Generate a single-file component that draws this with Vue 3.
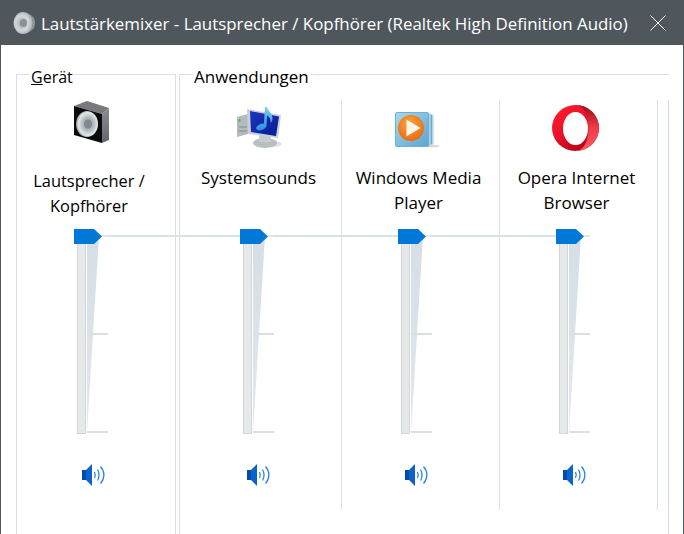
<script setup>
const apps = [
  { name: 'Systemsounds', icon: 'sys', cls: 'c-sys' },
  { name: 'Windows Media\nPlayer', icon: 'wmp', cls: 'c-wmp' },
  { name: 'Opera Internet\nBrowser', icon: 'opera', cls: 'c-opera' },
]
</script>

<template>
  <div class="win">
    <header class="title">
      <svg class="tico" width="22" height="24" viewBox="0 0 22 24">
        <defs>
          <radialGradient id="tg" cx="45%" cy="50%" r="55%"><stop offset="0" stop-color="#9aa0a4"/><stop offset=".6" stop-color="#d4d8da"/><stop offset="1" stop-color="#aab0b3"/></radialGradient>
        </defs>
        <path d="M10 2c5 .5 8 1.500 10.500 4.500 2 3 2 8 0 11-2.500 3-5.500 4.500-10.500 4.500z" fill="#8d9397"/>
        <ellipse cx="10" cy="12" rx="9.500" ry="11" fill="url(#tg)"/>
        <ellipse cx="10.500" cy="12" rx="3.500" ry="4" fill="#8a9094"/>
      </svg>
      <span class="ttext">Lautstärkemixer - Lautsprecher / Kopfhörer (Realtek High Definition Audio)</span>
      <svg class="close" width="16" height="16" viewBox="0 0 16 16"><path d="M.5.500l15 15M15.500.500l-15 15" stroke="#fff" fill="none"/></svg>
    </header>
    <main class="body">
      <div class="link"></div>
      <section class="group dev">
        <span class="legend"><u>G</u>erät</span>
        <div class="chan c-dev">
          <div class="icon">
            <svg width="36" height="44" viewBox="0 0 36 44">
              <defs>
                <radialGradient id="cone" cx="55%" cy="50%" r="55%"><stop offset="0" stop-color="#7f898e"/><stop offset=".5" stop-color="#b4c0c4"/><stop offset=".8" stop-color="#e2e8e9"/><stop offset="1" stop-color="#8b9092"/></radialGradient>
                <linearGradient id="side" x1="0" y1="0" x2="0" y2="1"><stop offset="0" stop-color="#8a8e92"/><stop offset="1" stop-color="#63676b"/></linearGradient>
              </defs>
              <path d="M1 6 L14 1 L36 8 L29 14z" fill="#77797c"/>
              <path d="M1 6 L29 14 V43 L1 35z" fill="#0b0b0b"/>
              <path d="M29 14 L36 8 V40 L29 43z" fill="url(#side)"/>
              <ellipse cx="14" cy="24" rx="11" ry="13" fill="url(#cone)"/>
              <ellipse cx="15" cy="24" rx="4" ry="4.500" fill="#7f898e"/>
            </svg>
          </div>
          <div class="name">{{ 'Lautsprecher /\nKopfhörer' }}</div>
          <div class="ctrl">
            <div class="slider">
              <div class="track"></div><div class="wedge"></div>
              <div class="tick t0"></div><div class="tick t1"></div><div class="tick t2"></div><div class="thumb"></div>
            </div>
            <svg class="vol" width="23" height="22" viewBox="0 0 23 22">
              <path d="M0 6h4v10H0z" fill="#004ea8"/><path d="M4 6 10 0v22L4 16z" fill="#0a63ce"/>
              <path d="M12.500 8c1 2 1 4 0 6M15.500 5.500c2 3 2 8 0 11M18.500 2.500c4.500 5 4.500 12 0 17" stroke="#2f86e0" stroke-width="1.300" fill="none"/>
            </svg>
          </div>
        </div>
      </section>
      <section class="group apps">
        <span class="legend">Anwendungen</span>
        <div class="chans">
          <div v-for="a in apps" :key="a.name" class="chan" :class="a.cls">
            <div class="icon">
              <svg v-if="a.icon === 'sys'" width="46" height="41" viewBox="0 0 46 41">
                <defs>
                  <linearGradient id="scr" x1="0" y1="0" x2="1" y2="1"><stop offset="0" stop-color="#1a36c0"/><stop offset="1" stop-color="#0a1c94"/></linearGradient>
                  <linearGradient id="note" x1="0" y1="0" x2="0" y2="1"><stop offset="0" stop-color="#7ccbf5"/><stop offset="1" stop-color="#2f8fe0"/></linearGradient>
                </defs>
                <ellipse cx="36" cy="37" rx="9" ry="3" fill="#e0e2e3"/>
                <path d="M0 10l11-3v20L0 30z" fill="#b4b9bc"/><rect x="1.500" y="12" width="2" height="3" fill="#53c04a"/>
                <path d="M2 20h8M2 24h8" stroke="#85898c"/>
                <ellipse cx="28" cy="36" rx="12" ry="5" fill="#b9bec0"/><path d="M22 28h12v7H22z" fill="#c8cccd"/>
                <path d="M10 2l34 6-3 23-30-4z" fill="#c9d0d3"/>
                <path d="M13 4 42 9.500 39 29 14 25z" fill="url(#scr)"/>
                <path d="M28 0h2c.5 4 6 6 5.500 12-.2 2-1 3-2 4 .5-4-1-6-3.500-7.500l-.5 10c-.5 3.500-6 6-9 4.500s-1-6 6.500-6.500z" fill="url(#note)"/>
              </svg>
              <svg v-else-if="a.icon === 'wmp'" width="45" height="38" viewBox="0 0 45 38">
                <defs>
                  <linearGradient id="cs" x1="0" y1="0" x2="1" y2="1"><stop offset="0" stop-color="#a8d8ef"/><stop offset="1" stop-color="#5ba5cf"/></linearGradient>
                  <radialGradient id="org" cx="45%" cy="35%" r="70%"><stop offset="0" stop-color="#f9a640"/><stop offset="1" stop-color="#e8690c"/></radialGradient>
                </defs>
                <ellipse cx="36" cy="34" rx="9" ry="1.500" fill="#d7dadb"/>
                <path d="M33 1.500h2.500v32H33z" fill="#a6d3ea"/><path d="M35.500 2.500h2v30h-2z" fill="#6fa9cc"/><path d="M37.500 3h1v29h-1z" fill="#a6d3ea"/>
                <rect x="0.500" y="0.500" width="33" height="34" rx="1" fill="url(#cs)" stroke="#6fb0d4"/>
                <circle cx="16" cy="16" r="13" fill="url(#org)"/>
                <path d="M11.500 7.500 25.500 16 11.500 24.500z" fill="#fff5e8"/>
              </svg>
              <svg v-else width="47" height="46" viewBox="0 0 47 46">
                <defs>
                  <linearGradient id="op" x1=".2" y1="0" x2=".8" y2="1"><stop offset="0" stop-color="#ff1b2d"/><stop offset=".5" stop-color="#e8102a"/><stop offset="1" stop-color="#a70014"/></linearGradient>
                  <linearGradient id="op2" x1=".5" y1="0" x2=".5" y2="1"><stop offset="0" stop-color="#9c0c12"/><stop offset=".5" stop-color="#f03c48"/><stop offset="1" stop-color="#ff5a64"/></linearGradient>
                </defs>
                <ellipse cx="23.500" cy="23" rx="23.500" ry="23" fill="url(#op)"/>
                <path d="M23.500 0C36.500 0 47 10.300 47 23S36.500 46 23.500 46c8 0 13-9.500 13-23S31.500 0 23.500 0z" fill="url(#op2)"/>
                <ellipse cx="23.500" cy="23.500" rx="12.500" ry="16.500" fill="#fff"/>
              </svg>
            </div>
            <div class="name">{{ a.name }}</div>
            <div class="ctrl">
              <div class="slider">
                <div class="track"></div><div class="wedge"></div>
                <div class="tick t0"></div><div class="tick t1"></div><div class="tick t2"></div><div class="thumb"></div>
              </div>
              <svg class="vol" width="23" height="22" viewBox="0 0 23 22">
                <path d="M0 6h4v10H0z" fill="#004ea8"/><path d="M4 6 10 0v22L4 16z" fill="#0a63ce"/>
                <path d="M12.500 8c1 2 1 4 0 6M15.500 5.500c2 3 2 8 0 11M18.500 2.500c4.500 5 4.500 12 0 17" stroke="#2f86e0" stroke-width="1.300" fill="none"/>
              </svg>
            </div>
          </div>
        </div>
      </section>
    </main>
  </div>
</template>

<style>
html, body { margin: 0; background: #fff; }
</style>
<style scoped>
.win { width: 684px; height: 534px; box-sizing: border-box; overflow: hidden; background: #fff; border: solid #4f575d; border-width: 0 1px; font-family: "Open Sans", "Liberation Sans", sans-serif; color: #000; }
.title { height: 45px; box-sizing: border-box; background: #4f575d; display: flex; align-items: center; padding: 0 17px 0 12px; color: #fff; font-size: 16.9px; }
.tico { margin-right: 6px; flex: none; }
.ttext { flex: 1; white-space: nowrap; padding-top: 1px; }
.close { flex: none; }
.body { position: relative; display: flex; align-items: flex-start; padding: 29px 0 0 15px; gap: 3px; }
.link { position: absolute; left: 101px; top: 190px; width: 455px; height: 2px; background: #d8e2ea; }
.group { position: relative; border: 1px solid #dcdfe1; border-bottom: 0; box-sizing: border-box; height: 460px; }
.dev { width: 160px; padding-top: 28px; }
.apps { width: 490px; border-right: 0; padding-top: 25px; }
.legend { position: absolute; left: 13px; top: -8px; padding: 0 1px; background: #fff; font-size: 17px; line-height: 20px; }
.dev .legend { font-size: 16px; left: 13px; }
.chans { display: flex; align-items: flex-start; width: 489px; height: 434px; border-right: 1px solid #d8dadc; box-sizing: border-box; }
.chan { width: 158px; flex: none; height: 410px; padding-right: 4px; box-sizing: border-box; border-right: 1px solid #d8e2ea; display: flex; flex-direction: column; align-items: center; }
.c-sys { width: 162px; }
.c-dev { border-right: 0; padding-right: 14px; }
.icon { height: 52px; display: flex; justify-content: center; align-items: flex-start; }
.c-dev .icon svg { margin: -3px 0 0 3px; }
.c-sys .icon svg { margin: 7px 0 0 3px; }
.c-wmp .icon svg { margin: 12px 0 0 -2px; }
.c-opera .icon svg { margin: 5px 0 0 -2px; }
.name { margin-top: 13px; height: 50px; line-height: 25px; font-size: 17px; text-align: center; white-space: pre-line; }
.c-dev .name { font-size: 16.4px; }
.ctrl { align-self: flex-start; margin-top: 14px; }
.c-dev .ctrl { margin-top: 11px; margin-left: 1px; }
.c-sys .ctrl { margin-left: 4px; }
.slider { position: relative; width: 120px; height: 212px; }
.track { position: absolute; left: 59px; top: 10px; width: 9px; height: 195px; box-sizing: border-box; background: #e6e9ea; border: 1px solid #d3d6d8; border-top: 0; }
.wedge { position: absolute; left: 69px; top: 7px; width: 12px; height: 197px; background: linear-gradient(#d5dee6, #e2e8ed); clip-path: polygon(0 0, 100% 0, 0 100%); }
.thumb { position: absolute; left: 56px; top: 0; width: 28px; height: 15px; background: #0078d7; clip-path: polygon(0 0, 20px 0, 28px 50%, 20px 100%, 0 100%); }
.tick { position: absolute; left: 69px; width: 21px; height: 2px; background: #dcdfe1; }
.t0 { top: 6px; background: #e4e6e8; }
.t1 { top: 104px; }
.t2 { top: 202px; }
.vol { display: block; margin: 23px 0 0 63px; }
.c-dev .vol { margin-left: 64px; }
</style>
